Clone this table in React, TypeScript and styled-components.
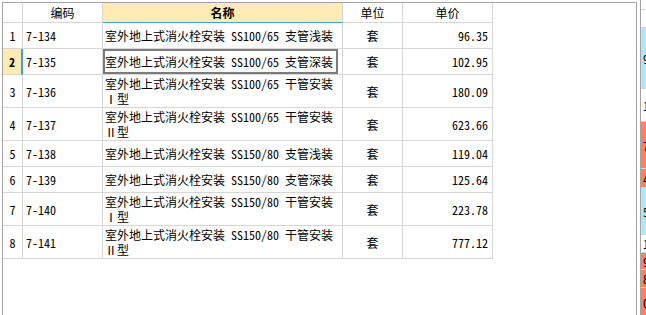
import React from 'react';
import styled, {createGlobalStyle, css} from 'styled-components';

const GlobalStyle = createGlobalStyle`
  html, body {
    margin: 0;
    padding: 0;
    background: #ffffff;
  }
  body {
    font-family: "Noto Sans Mono CJK SC", "Noto Sans CJK SC", "Liberation Sans", sans-serif;
    font-size: 12px;
    color: #000000;
  }
`;

const colors = {
    grid: '#d6d6d6',
    frame: '#a3a3a3',
    selectYellow: '#ffebb3',
    selectBlue: '#3ba3d8',
    focus: '#7b7b7b',
    stripBlue: '#aee7f9',
    stripOrange: '#f5855f',
};

const COLUMNS = '20px 80px 240px 60px 90px';

interface Item {
    no: number
    code: string
    name: string[]
    unit: string
    price: string
}

const items: Item[] = [
    {no: 1, code: '7-134', name: ['室外地上式消火栓安装 SS100/65 支管浅装'], unit: '套', price: '96.35'},
    {no: 2, code: '7-135', name: ['室外地上式消火栓安装 SS100/65 支管深装'], unit: '套', price: '102.95'},
    {no: 3, code: '7-136', name: ['室外地上式消火栓安装 SS100/65 干管安装', 'Ⅰ型'], unit: '套', price: '180.09'},
    {no: 4, code: '7-137', name: ['室外地上式消火栓安装 SS100/65 干管安装', 'Ⅱ型'], unit: '套', price: '623.66'},
    {no: 5, code: '7-138', name: ['室外地上式消火栓安装 SS150/80 支管浅装'], unit: '套', price: '119.04'},
    {no: 6, code: '7-139', name: ['室外地上式消火栓安装 SS150/80 支管深装'], unit: '套', price: '125.64'},
    {no: 7, code: '7-140', name: ['室外地上式消火栓安装 SS150/80 干管安装', 'Ⅰ型'], unit: '套', price: '223.78'},
    {no: 8, code: '7-141', name: ['室外地上式消火栓安装 SS150/80 干管安装', 'Ⅱ型'], unit: '套', price: '777.12'},
];

const SELECTED_ROW = 2;

type StripTone = 'white' | 'blue' | 'orange';

const stripCells: {tone: StripTone, height: number, text: string}[] = [
    {tone: 'white', height: 10, text: ''},
    {tone: 'white', height: 18, text: ''},
    {tone: 'blue', height: 61, text: '9'},
    {tone: 'white', height: 33, text: '1'},
    {tone: 'orange', height: 47, text: '7'},
    {tone: 'orange', height: 19, text: '4'},
    {tone: 'blue', height: 47, text: '5'},
    {tone: 'white', height: 18, text: '1.'},
    {tone: 'orange', height: 17, text: '9'},
    {tone: 'orange', height: 18, text: '8'},
    {tone: 'orange', height: 30, text: '0'},
];

export default function App() {
    return (
        <>
            <GlobalStyle/>
            <Page>
                <Panel>
                    <Table>
                        <HeaderRow>
                            <HeaderCell/>
                            <HeaderCell>编码</HeaderCell>
                            <HeaderCell active>名称</HeaderCell>
                            <HeaderCell>单位</HeaderCell>
                            <HeaderCell>单价</HeaderCell>
                        </HeaderRow>
                        {items.map(item => {
                            const selected = item.no === SELECTED_ROW;
                            return (
                                <Row key={item.no} tall={item.name.length > 1}>
                                    <NumberCell selected={selected}>{item.no}</NumberCell>
                                    <CodeCell>{item.code}</CodeCell>
                                    <NameCell>
                                        {item.name.map(line => <NameLine key={line}>{line}</NameLine>)}
                                        {selected && <FocusFrame/>}
                                    </NameCell>
                                    <UnitCell>{item.unit}</UnitCell>
                                    <PriceCell>{item.price}</PriceCell>
                                </Row>
                            );
                        })}
                    </Table>
                </Panel>
                <Strip>
                    {stripCells.map((cell, i) => (
                        <StripCell key={i} tone={cell.tone} style={{height: cell.height}}>{cell.text}</StripCell>
                    ))}
                </Strip>
            </Page>
        </>
    );
}

const Page = styled.div`
  display: flex;
  align-items: flex-start;
  gap: 3px;
  width: 646px;
  height: 315px;
  padding: 2px 0 0 2px;
  box-sizing: border-box;
  overflow: hidden;
`;

const Panel = styled.div`
  width: 635px;
  height: 330px;
  flex-shrink: 0;
  box-sizing: border-box;
  border: 1px solid ${colors.frame};
  border-bottom: none;
  background: #ffffff;
`;

const Table = styled.div`
  display: flex;
  flex-direction: column;
  width: 490px;
`;

const rowGrid = css`
  display: grid;
  grid-template-columns: ${COLUMNS};
`;

const HeaderRow = styled.div`
  ${rowGrid};
  height: 20px;
`;

const HeaderCell = styled.div<{active?: boolean}>`
  display: flex;
  align-items: center;
  justify-content: center;
  box-sizing: border-box;
  border-right: 1px solid ${colors.grid};
  border-bottom: 1px solid ${p => p.active ? colors.selectBlue : colors.grid};
  background: ${p => p.active ? colors.selectYellow : '#ffffff'};
  font-weight: ${p => p.active ? 700 : 400};
  font-size: 12px;
  line-height: 14px;
`;

const Row = styled.div<{tall: boolean}>`
  ${rowGrid};
  height: ${p => p.tall ? '33px' : '26px'};
`;

const BaseCell = styled.div`
  position: relative;
  display: flex;
  align-items: center;
  box-sizing: border-box;
  border-right: 1px solid ${colors.grid};
  border-bottom: 1px solid ${colors.grid};
  line-height: 15px;
  white-space: nowrap;
  overflow: hidden;
`;

const NumberCell = styled(BaseCell)<{selected: boolean}>`
  justify-content: center;
  background: ${p => p.selected ? colors.selectYellow : '#ffffff'};
  font-weight: ${p => p.selected ? 700 : 400};
  border-right: ${p => p.selected ? `2px solid ${colors.selectBlue}` : `1px solid ${colors.grid}`};
`;

const CodeCell = styled(BaseCell)`
  padding-left: 3px;
`;

const NameCell = styled(BaseCell)`
  flex-direction: column;
  align-items: flex-start;
  justify-content: center;
  padding-left: 2px;
`;

const NameLine = styled.span`
  display: block;
  height: 15px;
`;

const FocusFrame = styled.div`
  position: absolute;
  left: 0;
  top: 0;
  right: 4px;
  bottom: 0;
  border: 2px solid ${colors.focus};
`;

const UnitCell = styled(BaseCell)`
  justify-content: center;
`;

const PriceCell = styled(BaseCell)`
  justify-content: flex-end;
  padding-right: 4px;
`;

const Strip = styled.div`
  display: flex;
  flex-direction: column;
  width: 40px;
  flex-shrink: 0;
  margin-top: -2px;
  border-left: 1px solid ${colors.frame};
`;

const toneColor: Record<StripTone, string> = {
    white: '#ffffff',
    blue: colors.stripBlue,
    orange: colors.stripOrange,
};

const StripCell = styled.div<{tone: StripTone}>`
  display: flex;
  align-items: center;
  box-sizing: border-box;
  padding-left: 2px;
  background: ${p => toneColor[p.tone]};
  border-bottom: 1px solid ${colors.grid};
  font-size: 12px;
  overflow: hidden;
`;
